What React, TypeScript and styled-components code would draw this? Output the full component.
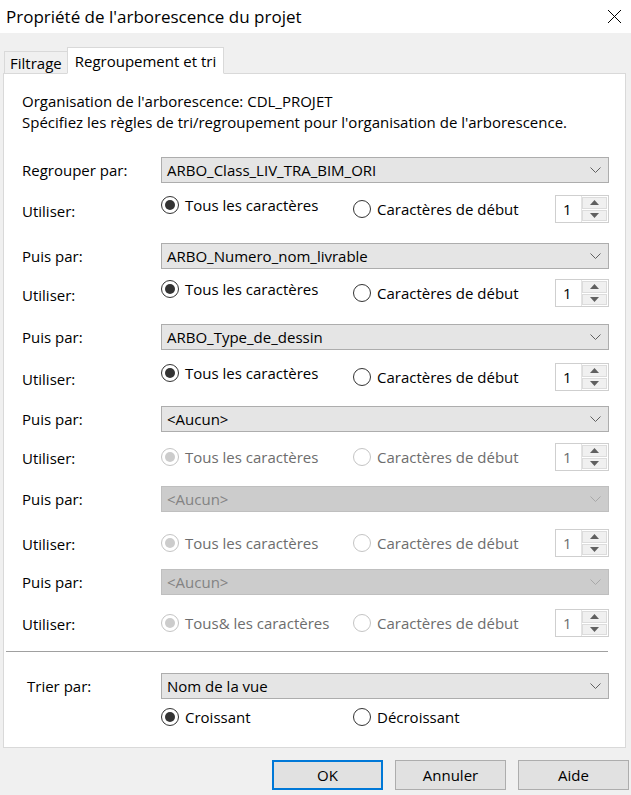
import React from 'react';
import styled, { createGlobalStyle } from 'styled-components';

const Global = createGlobalStyle`
  html, body { margin: 0; padding: 0; background: #f0f0f0; }
  body {
    font-family: "Open Sans", "Noto Sans", sans-serif;
    font-size: 15px;
    color: #000;
  }
  * { box-sizing: border-box; }
`;

const Window = styled.div`
  width: 631px;
  height: 795px;
  background: #f0f0f0;
  display: flex;
  flex-direction: column;
  overflow: hidden;
`;

const TitleBar = styled.div`
  height: 33px;
  flex: none;
  background: #fff;
  display: flex;
  align-items: center;
  justify-content: space-between;
  padding: 0 9px 0 6px;
  font-size: 17px;
  color: #000;
`;

const CloseIcon = styled.svg`
  width: 15px;
  height: 15px;
`;

const TabStrip = styled.div`
  display: flex;
  align-items: flex-end;
  padding-left: 4px;
  margin-top: 13px;
  height: 27px;
  position: relative;
  z-index: 1;
`;

const Tab = styled.div<{ $active?: boolean }>`
  height: ${p => (p.$active ? 27 : 22)}px;
  margin-bottom: ${p => (p.$active ? -1 : 0)}px;
  padding: 0 ${p => (p.$active ? 7 : 5)}px;
  border: 1px solid #d9d9d9;
  border-bottom: ${p => (p.$active ? '1px solid #fff' : 'none')};
  border-right: ${p => (p.$active ? '1px solid #d9d9d9' : 'none')};
  background: ${p => (p.$active ? '#fff' : '#f0f0f0')};
  display: flex;
  align-items: center;
  font-size: 15px;
  white-space: nowrap;
`;

const Panel = styled.div`
  margin-left: 3px;
  width: 623px;
  height: 675px;
  background: #fff;
  border: 1px solid #d9d9d9;
  padding: 17px 16px 0 18px;
  display: flex;
  flex-direction: column;
`;

const Intro = styled.div`
  line-height: 21px;
  white-space: nowrap;
`;

const FieldRow = styled.div<{ $mt: number }>`
  display: grid;
  grid-template-columns: 139px 448px;
  align-items: center;
  margin-top: ${p => p.$mt}px;
`;

const Label = styled.span<{ $dy?: number }>`
  position: relative;
  top: ${p => p.$dy ?? 0}px;
`;

const Select = styled.div<{ $disabled?: boolean }>`
  height: 26px;
  border: 1px solid ${p => (p.$disabled ? '#bfbfbf' : '#adadad')};
  background: ${p => (p.$disabled ? '#cccccc' : '#e5e5e5')};
  color: ${p => (p.$disabled ? '#838383' : '#000')};
  display: flex;
  align-items: center;
  justify-content: space-between;
  padding: 0 7px 0 5px;
`;

const Chevron = styled.svg`
  width: 11px;
  height: 6px;
`;

const UseRow = styled.div<{ $mt: number }>`
  display: grid;
  grid-template-columns: 139px 192px 202px 54px;
  align-items: center;
  margin-top: ${p => p.$mt}px;
  height: 28px;
`;

const RadioLabel = styled.span<{ $disabled?: boolean; $dy?: number }>`
  display: flex;
  align-items: center;
  gap: 6px;
  position: relative;
  top: ${p => p.$dy ?? 0}px;
  color: ${p => (p.$disabled ? '#6d6d6d' : '#000')};
  white-space: nowrap;
`;

const RadioCircle = styled.span<{ $checked?: boolean; $disabled?: boolean }>`
  width: 18px;
  height: 18px;
  border-radius: 50%;
  border: 1px solid ${p => (p.$disabled ? '#c4c4c4' : '#333')};
  background: #fff;
  display: flex;
  align-items: center;
  justify-content: center;
  flex: none;
  &::after {
    content: '';
    display: ${p => (p.$checked ? 'block' : 'none')};
    width: 10px;
    height: 10px;
    border-radius: 50%;
    background: ${p => (p.$disabled ? '#cccccc' : '#333')};
  }
`;

const Spinner = styled.div`
  width: 54px;
  height: 28px;
  border: 1px solid #cfcfcf;
  background: #fff;
  display: flex;
`;

const SpinValue = styled.div<{ $disabled?: boolean }>`
  flex: 1;
  padding-left: 7px;
  display: flex;
  align-items: center;
  color: ${p => (p.$disabled ? '#6d6d6d' : '#000')};
`;

const SpinButtons = styled.div`
  width: 27px;
  display: flex;
  flex-direction: column;
  gap: 1px;
  padding: 1px 1px 1px 0;
  border-left: 1px solid #e3e3e3;
`;

const SpinButton = styled.div`
  flex: 1;
  background: #f0f0f0;
  border: 1px solid #dcdcdc;
  display: flex;
  align-items: center;
  justify-content: center;
`;

const Arrow = styled.svg`
  width: 9px;
  height: 5px;
`;

const Separator = styled.div`
  height: 1px;
  background: #a0a0a0;
  margin: 14px 1px 0 -16px;
`;

const SortRow = styled.div`
  display: grid;
  grid-template-columns: 139px 448px;
  align-items: center;
  margin-top: 21px;
`;

const OrderRow = styled.div`
  display: grid;
  grid-template-columns: 139px 192px 1fr;
  align-items: center;
  margin-top: 8px;
`;

const SortLabel = styled.span`
  padding-left: 5px;
`;

const ButtonBar = styled.div`
  display: flex;
  justify-content: flex-end;
  gap: 12px;
  padding-right: 2px;
  margin-top: 12px;
`;

const Button = styled.button<{ $primary?: boolean }>`
  width: 111px;
  height: 30px;
  background: #e1e1e1;
  border: ${p => (p.$primary ? '2px solid #0078d7' : '1px solid #adadad')};
  font-family: inherit;
  font-size: 15px;
  color: #000;
  padding: 0;
`;

const ChevronDown = ({ disabled }: { disabled?: boolean }) => (
  <Chevron viewBox="0 0 11 6">
    <path d="M0.5 0.5 L5.5 5.5 L10.5 0.5" fill="none" stroke={disabled ? '#a8a8a8' : '#606060'} strokeWidth="1" />
  </Chevron>
);

const Radio = ({ label, checked, disabled, dy }: { label: string; checked?: boolean; disabled?: boolean; dy?: number }) => (
  <RadioLabel $disabled={disabled} $dy={dy}>
    <RadioCircle $checked={checked} $disabled={disabled} />
    {label}
  </RadioLabel>
);

const NumSpinner = ({ disabled }: { disabled?: boolean }) => (
  <Spinner>
    <SpinValue $disabled={disabled}>1</SpinValue>
    <SpinButtons>
      <SpinButton>
        <Arrow viewBox="0 0 9 5"><path d="M0 5 L4.5 0 L9 5 Z" fill="#606060" /></Arrow>
      </SpinButton>
      <SpinButton>
        <Arrow viewBox="0 0 9 5"><path d="M0 0 L4.5 5 L9 0 Z" fill="#606060" /></Arrow>
      </SpinButton>
    </SpinButtons>
  </Spinner>
);

type Group = {
  label: string;
  value: string;
  selectDisabled?: boolean;
  radiosDisabled?: boolean;
  allLabel: string;
  mtSelect: number;
  mtUse: number;
};

const groups: Group[] = [
  { label: 'Regrouper par:', value: 'ARBO_Class_LIV_TRA_BIM_ORI', allLabel: 'Tous les caractères', mtSelect: 24, mtUse: 12 },
  { label: 'Puis par:', value: 'ARBO_Numero_nom_livrable', allLabel: 'Tous les caractères', mtSelect: 20, mtUse: 10 },
  { label: 'Puis par:', value: 'ARBO_Type_de_dessin', allLabel: 'Tous les caractères', mtSelect: 17, mtUse: 13 },
  { label: 'Puis par:', value: '<Aucun>', radiosDisabled: true, allLabel: 'Tous les caractères', mtSelect: 15, mtUse: 11 },
  { label: 'Puis par:', value: '<Aucun>', selectDisabled: true, radiosDisabled: true, allLabel: 'Tous les caractères', mtSelect: 15, mtUse: 17 },
  { label: 'Puis par:', value: '<Aucun>', selectDisabled: true, radiosDisabled: true, allLabel: 'Tous& les caractères', mtSelect: 12, mtUse: 14 },
];

export default function App() {
  return (
    <Window>
      <Global />
      <TitleBar>
        <span>Propriété de l'arborescence du projet</span>
        <CloseIcon viewBox="0 0 15 15">
          <path d="M1 1 L14 14 M14 1 L1 14" stroke="#000" strokeWidth="1" />
        </CloseIcon>
      </TitleBar>
      <TabStrip>
        <Tab>Filtrage</Tab>
        <Tab $active>Regroupement et tri</Tab>
      </TabStrip>
      <Panel>
        <Intro>
          Organisation de l'arborescence: CDL_PROJET
          <br />
          Spécifiez les règles de tri/regroupement pour l'organisation de l'arborescence.
        </Intro>
        {groups.map((g, i) => (
          <React.Fragment key={i}>
            <FieldRow $mt={g.mtSelect}>
              <Label>{g.label}</Label>
              <Select $disabled={g.selectDisabled}>
                <span>{g.value}</span>
                <ChevronDown disabled={g.selectDisabled} />
              </Select>
            </FieldRow>
            <UseRow $mt={g.mtUse}>
              <Label $dy={g.radiosDisabled ? 1 : 2}>Utiliser:</Label>
              <Radio label={g.allLabel} checked disabled={g.radiosDisabled} dy={g.radiosDisabled ? 0 : -4} />
              <Radio label="Caractères de début" disabled={g.radiosDisabled} />
              <NumSpinner disabled={g.radiosDisabled} />
            </UseRow>
          </React.Fragment>
        ))}
        <Separator />
        <SortRow>
          <SortLabel>Trier par:</SortLabel>
          <Select>
            <span>Nom de la vue</span>
            <ChevronDown />
          </Select>
        </SortRow>
        <OrderRow>
          <span />
          <Radio label="Croissant" checked />
          <Radio label="Décroissant" />
        </OrderRow>
      </Panel>
      <ButtonBar>
        <Button $primary>OK</Button>
        <Button>Annuler</Button>
        <Button>Aide</Button>
      </ButtonBar>
    </Window>
  );
}
